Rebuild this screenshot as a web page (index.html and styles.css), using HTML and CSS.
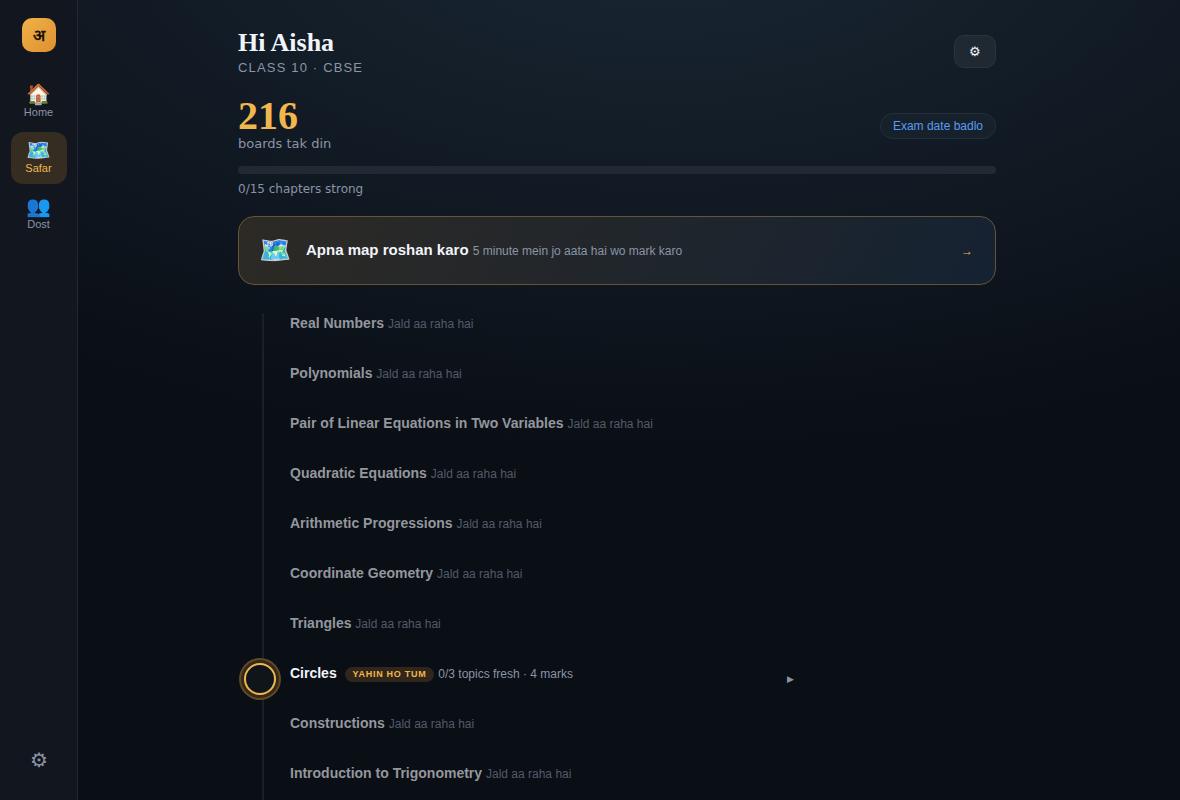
FILE: index.html
```html
<!DOCTYPE html>
<html lang="en">

<head>
  <meta charset="UTF-8">
  <meta name="viewport" content="width=device-width, initial-scale=1.0">
  <title>Safar</title>
  <link rel="stylesheet" href="styles.css">
</head>

<body>
  <nav class="sidebar">
    <div class="logo">अ</div>
    <a class="nav-link" href="#home"><span class="nav-icon">🏠</span>Home</a>
    <a class="nav-link active" href="#safar"><span class="nav-icon">🗺️</span>Safar</a>
    <a class="nav-link" href="#dost"><span class="nav-icon">👥</span>Dost</a>
    <a class="nav-settings" href="#settings" aria-label="Settings">⚙</a>
  </nav>

  <main class="main">
    <div class="content">
      <header class="header">
        <div>
          <h1>Hi Aisha</h1>
          <p class="class-name">CLASS 10 · CBSE</p>
        </div>
        <button class="settings-btn" type="button" aria-label="Settings">⚙</button>
      </header>

      <section class="countdown">
        <div>
          <div class="days">216</div>
          <div class="days-label">boards tak din</div>
        </div>
        <button class="date-btn" type="button">Exam date badlo</button>
      </section>

      <div class="progress"></div>
      <p class="progress-label">0/15 chapters strong</p>

      <a class="map-card" href="#map">
        <span class="map-icon">🗺️</span>
        <span class="map-text"><strong>Apna map roshan karo</strong> <small>5 minute mein jo aata hai wo mark karo</small></span>
        <span class="map-arrow">→</span>
      </a>

      <ol class="chapters">
        <li class="chapter"><strong>Real Numbers</strong> <small>Jald aa raha hai</small></li>
        <li class="chapter"><strong>Polynomials</strong> <small>Jald aa raha hai</small></li>
        <li class="chapter"><strong>Pair of Linear Equations in Two Variables</strong> <small>Jald aa raha hai</small></li>
        <li class="chapter"><strong>Quadratic Equations</strong> <small>Jald aa raha hai</small></li>
        <li class="chapter"><strong>Arithmetic Progressions</strong> <small>Jald aa raha hai</small></li>
        <li class="chapter"><strong>Coordinate Geometry</strong> <small>Jald aa raha hai</small></li>
        <li class="chapter"><strong>Triangles</strong> <small>Jald aa raha hai</small></li>
        <li class="chapter current">
          <a class="chapter-link" href="#circles">
            <span class="node"></span>
            <span class="chapter-text"><strong>Circles</strong> <span class="badge">YAHIN HO TUM</span> <small>0/3 topics fresh · 4 marks</small></span>
            <span class="chapter-arrow">▶</span>
          </a>
        </li>
        <li class="chapter"><strong>Constructions</strong> <small>Jald aa raha hai</small></li>
        <li class="chapter"><strong>Introduction to Trigonometry</strong> <small>Jald aa raha hai</small></li>
      </ol>
    </div>
  </main>
</body>

</html>
```

FILE: styles.css
```css
* {
  box-sizing: border-box;
}

body {
  margin: 0;
  display: flex;
  min-height: 100vh;
  background: radial-gradient(1200px 600px at 56% -10%, #192734, #0a0e15 90%);
  background-color: #0a0e15;
  color: #f1f4fb;
  font-family: "Liberation Sans", Arial, sans-serif;
}

h1,
p {
  margin: 0;
}

a {
  color: inherit;
  text-decoration: none;
}

button {
  font-family: inherit;
  cursor: pointer;
}

.sidebar {
  display: flex;
  flex-direction: column;
  align-items: center;
  gap: 4px;
  width: 78px;
  flex-shrink: 0;
  padding: 18px 10px;
  background-color: #12161e;
  border-right: 1px solid #23272f;
}

.logo {
  display: flex;
  align-items: center;
  justify-content: center;
  width: 34px;
  height: 34px;
  margin-bottom: 20px;
  border-radius: 10px;
  background: linear-gradient(135deg, #f0b347, #de8f30);
  color: #17130c;
  font-size: 16px;
  font-weight: bold;
}

.nav-link {
  display: flex;
  flex-direction: column;
  align-items: center;
  justify-content: center;
  width: 56px;
  height: 52px;
  padding-bottom: 4px;
  border-radius: 12px;
  color: #8b94a7;
  font-size: 11px;
  line-height: 13px;
}

.nav-link.active {
  background-color: #352c22;
  color: #f0b74f;
}

.nav-icon {
  font-size: 20px;
  line-height: 24px;
}

.nav-settings {
  margin-top: auto;
  padding: 10px;
  color: #8b94a7;
  font-size: 20px;
  line-height: 24px;
}

.main {
  flex: 1;
  display: flex;
  padding-right: 24px;
}

.content {
  flex: 1;
  display: flex;
  flex-direction: column;
  max-width: 798px;
  margin: 0 auto;
  padding: 27px 20px 0;
}

.header,
.countdown {
  display: flex;
  align-items: center;
  justify-content: space-between;
}

h1 {
  font-family: "Liberation Serif", Georgia, serif;
  font-size: 26px;
  line-height: 32px;
}

.class-name {
  color: #8b94a7;
  font-size: 13px;
  line-height: 17px;
  letter-spacing: 0.09em;
}

.settings-btn {
  width: 42px;
  height: 33px;
  padding: 0;
  border: 1px solid #2b333c;
  border-radius: 10px;
  background-color: #202831;
  color: #f1f4fb;
  font-size: 13px;
}

.countdown {
  margin-top: 20px;
}

.days {
  color: #f0b74f;
  font-family: "Liberation Serif", Georgia, serif;
  font-size: 40px;
  font-weight: bold;
  line-height: 40px;
}

.days-label,
.progress-label {
  color: #8b94a7;
  font-family: "DejaVu Sans", sans-serif;
  font-size: 13px;
  line-height: 16px;
}

.date-btn {
  margin-top: 4px;
  padding: 5px 12px;
  border: 1px solid #232f3a;
  border-radius: 14px;
  background-color: #16212b;
  color: #5b9bf3;
  font-size: 12px;
  line-height: 14px;
}

.progress {
  height: 8px;
  margin-top: 14px;
  border-radius: 4px;
  background-color: #222932;
}

.progress-label {
  margin-top: 7px;
  font-size: 12px;
}

.map-card {
  display: flex;
  align-items: center;
  gap: 15px;
  margin-top: 19px;
  padding: 16px 22px 16px 20px;
  border: 1px solid #665535;
  border-radius: 16px;
  background: linear-gradient(120deg, #2d2a25, #152232);
}

.map-icon {
  font-size: 26px;
  line-height: 35px;
}

.map-text {
  flex: 1;
  padding-bottom: 2px;
  font-size: 15px;
}

.map-text small {
  color: #8b94a7;
  font-size: 12px;
}

.map-arrow {
  color: #f0b74f;
  font-size: 12px;
}

.chapters {
  flex: 1;
  display: flex;
  flex-direction: column;
  gap: 18px;
  margin: 28px 0 0 24px;
  padding: 0 0 0 26px;
  border-left: 2px solid #1b1f26;
  list-style: none;
}

.chapter {
  height: 32px;
  color: #94979d;
  font-size: 14px;
  line-height: 20px;
}

.chapter small {
  color: #535b69;
  font-size: 12px;
}

.chapter.current {
  color: #f1f4fb;
}

.chapter.current small {
  color: #8b94a7;
}

/* pulls the node back over the line */
.chapter-link {
  display: flex;
  gap: 14px;
  max-width: 550px;
  margin-left: -46px;
}

.node {
  width: 32px;
  height: 32px;
  border: 2px solid #f0b74f;
  border-radius: 50%;
  background-color: #10151c;
  box-shadow: 0 0 0 3px #35291b, 0 0 0 5px #5f4926;
}

.chapter-text {
  flex: 1;
}

.badge {
  display: inline-block;
  margin-left: 4px;
  padding: 0 8px;
  border-radius: 8px;
  background-color: #30261b;
  color: #f0b74f;
  font-size: 9px;
  font-weight: bold;
  line-height: 15px;
  letter-spacing: 0.08em;
  vertical-align: middle;
}

.chapter-arrow {
  align-self: center;
  color: #8b94a7;
  font-size: 9px;
}
```
